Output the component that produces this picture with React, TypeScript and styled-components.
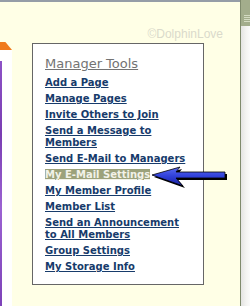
import React from 'react';
import styled, { createGlobalStyle } from 'styled-components';

const GlobalStyle = createGlobalStyle`
  html, body {
    margin: 0;
    padding: 0;
    background: #ffffff;
  }
`;

const links = [
  'Add a Page',
  'Manage Pages',
  'Invite Others to Join',
  'Send a Message to Members',
  'Send E-Mail to Managers',
  'My E-Mail Settings',
  'My Member Profile',
  'Member List',
  'Send an Announcement to All Members',
  'Group Settings',
  'My Storage Info',
];

const App = () => {
  return (
    <Page>
      <GlobalStyle />
      <Frame>
        <LeftStrip>
          <OrangeTab />
          <WhitePanel>
            <PurpleEdge />
          </WhitePanel>
        </LeftStrip>
        <Main>
          <Watermark>©DolphinLove</Watermark>
          <ToolsBox>
            <Title>Manager Tools</Title>
            <LinkList>
              {links.map((label) => (
                <LinkItem key={label}>
                  <ToolLink href="#" $active={label === 'My E-Mail Settings'}>
                    {label}
                  </ToolLink>
                  {label === 'My E-Mail Settings' && (
                    <Arrow width="80" height="28" viewBox="0 0 80 28">
                      <defs>
                        <linearGradient id="arrowFill" x1="0" y1="0" x2="0" y2="1">
                          <stop offset="0" stopColor="#5a6cf4" />
                          <stop offset="0.5" stopColor="#2f3fd8" />
                          <stop offset="1" stopColor="#18209a" />
                        </linearGradient>
                      </defs>
                      <path
                        d="M4 13 L32 5 L28 10 L77 10 L77 16 L28 16 L35 24 Z"
                        fill="#000"
                      />
                      <path
                        d="M2 11 L30 3 L26 8 L75 8 L75 14 L26 14 L33 22 Z"
                        fill="url(#arrowFill)"
                        stroke="#000"
                        strokeWidth="0.8"
                        strokeLinejoin="round"
                      />
                    </Arrow>
                  )}
                </LinkItem>
              ))}
            </LinkList>
          </ToolsBox>
        </Main>
      </Frame>
      <Scrollbar>
        <Thumb>
          <Grip />
        </Thumb>
        <Track />
      </Scrollbar>
    </Page>
  );
};

export default App;

const Page = styled.div`
  display: flex;
  width: 250px;
  height: 306px;
  overflow: hidden;
`;

const Frame = styled.div`
  flex: 1;
  display: flex;
  border-top: 2px solid #959da7;
`;

const LeftStrip = styled.div`
  width: 12px;
  display: flex;
  flex-direction: column;
  background: #ffffe6;
`;

const OrangeTab = styled.div`
  margin-top: 40px;
  height: 8px;
  background: #f07a1c;
  clip-path: polygon(0 0, 45% 0, 100% 100%, 0 100%);
`;

const WhitePanel = styled.div`
  flex: 1;
  display: flex;
  padding-top: 11px;
  background: #ffffff;
`;

const PurpleEdge = styled.div`
  width: 2px;
  background: linear-gradient(180deg, #8d52c6 0%, #7a3db3 30%, #9b62d2 60%, #7d42b8 100%);
`;

const Main = styled.div`
  flex: 1;
  background: #ffffe6;
  padding-top: 25px;
`;

const Watermark = styled.div`
  font-family: 'Liberation Sans', Arial, sans-serif;
  font-size: 12px;
  line-height: 14px;
  color: #dadacb;
  text-align: right;
  padding-right: 17px;
  height: 16px;
`;

const ToolsBox = styled.div`
  width: 146px;
  margin-left: 20px;
  padding: 12px 12px 11px;
  border: 1px solid #666666;
  background: #ffffff;
`;

const Title = styled.div`
  font-family: 'DejaVu Sans', Verdana, sans-serif;
  font-size: 13px;
  line-height: 16px;
  color: #737373;
  text-decoration: underline;
  margin-bottom: 5px;
`;

const LinkList = styled.ul`
  list-style: none;
  margin: 0;
  padding: 0;
`;

const LinkItem = styled.li`
  position: relative;
  margin-bottom: 4px;
  font-family: 'DejaVu Sans', Verdana, sans-serif;
  font-size: 10px;
  font-weight: bold;
  line-height: 12px;
  &:last-child {
    margin-bottom: 0;
  }
`;

const ToolLink = styled.a<{ $active?: boolean }>`
  color: ${(p) => (p.$active ? '#f2f2e8' : '#173b6b')};
  background: ${(p) => (p.$active ? '#9ca27b' : 'transparent')};
  text-decoration: underline;
`;

const Arrow = styled.svg`
  position: absolute;
  left: 105px;
  top: -5px;
`;

const Scrollbar = styled.div`
  width: 9px;
  display: flex;
  flex-direction: column;
  border-left: 1px solid #7f8a6c;
`;

const Thumb = styled.div`
  height: 26px;
  background: #a3ad8c;
  display: flex;
  align-items: flex-start;
  padding: 15px 0 0 3px;
  box-sizing: border-box;
`;

const Grip = styled.div`
  width: 6px;
  height: 8px;
  background: repeating-linear-gradient(
    180deg,
    #d4dbc2 0px,
    #d4dbc2 1px,
    transparent 1px,
    transparent 2px
  );
`;

const Track = styled.div`
  flex: 1;
  background: linear-gradient(90deg, #e4e4e2 0%, #f4f4f2 60%, #fafafa 100%);
`;
